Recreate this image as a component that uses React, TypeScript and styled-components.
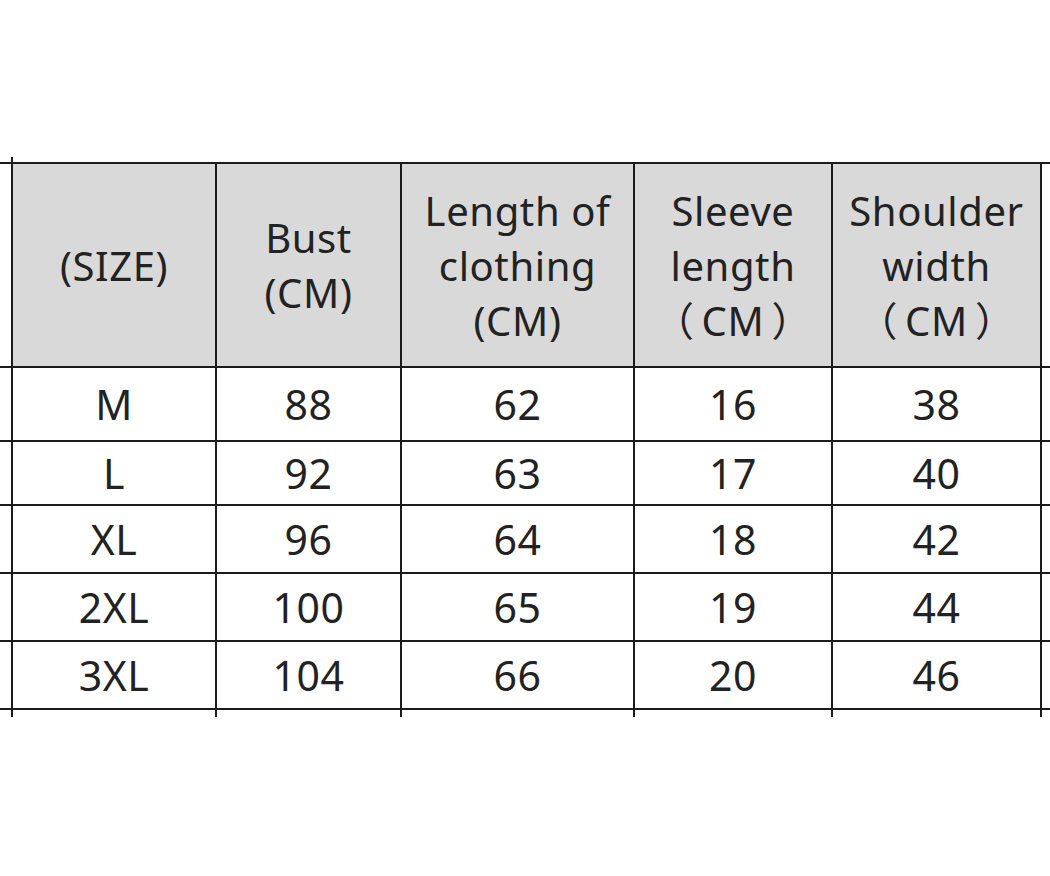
import React from "react";
import styled, { createGlobalStyle } from "styled-components";

const Global = createGlobalStyle`
  html, body { margin: 0; padding: 0; background: #ffffff; }
  body { font-family: "Noto Sans", "Noto Sans CJK KR", sans-serif; }
`;

const Page = styled.div`
  width: 1050px;
  height: 876px;
  overflow: hidden;
  padding-top: 157px;
  box-sizing: border-box;
`;

const Table = styled.table`
  border-collapse: collapse;
  table-layout: fixed;
  width: 1050px;
  color: #222222;
  font-family: "Noto Sans", "Noto Sans CJK KR", sans-serif;
`;

const Col = styled.col<{ $w: number }>`
  width: ${(p) => p.$w}px;
`;

const lineColor = "#1b1b1b";

const HeadCell = styled.th<{ $stub?: "left" | "right" }>`
  height: 202px;
  padding: 0;
  background: ${(p) => (p.$stub ? "#ffffff" : "#d9d9d9")};
  border-top: 2px solid ${lineColor};
  border-bottom: 2px solid ${lineColor};
  border-left: ${(p) => (p.$stub === "left" ? "none" : `2px solid ${lineColor}`)};
  border-right: ${(p) => (p.$stub === "right" ? "none" : `2px solid ${lineColor}`)};
  font-weight: 400;
  font-size: 40px;
  letter-spacing: 0.6px;
  line-height: 55px;
  text-align: center;
  vertical-align: middle;
  white-space: nowrap;
`;

const WideUnit = styled.span`
  padding: 0 7px;
`;

const Cell = styled.td<{ $stub?: "left" | "right"; $h: number }>`
  height: ${(p) => p.$h}px;
  padding: 0;
  background: #ffffff;
  border-top: 2px solid ${lineColor};
  border-bottom: 2px solid ${lineColor};
  border-left: ${(p) => (p.$stub === "left" ? "none" : `2px solid ${lineColor}`)};
  border-right: ${(p) => (p.$stub === "right" ? "none" : `2px solid ${lineColor}`)};
  font-size: 41px;
  letter-spacing: 0.5px;
  line-height: 1;
  text-align: center;
  vertical-align: middle;
`;

const ExtCell = styled.td<{ $line?: boolean; $h: number }>`
  height: ${(p) => p.$h}px;
  padding: 0;
  border: none;
  border-left: ${(p) => (p.$line ? `2px solid ${lineColor}` : "none")};
`;

const widths = [12, 204, 185, 233, 198, 209, 9];

const headers: React.ReactNode[] = [
  <>(SIZE)</>,
  <>
    Bust
    <br />
    (CM)
  </>,
  <>
    Length of
    <br />
    clothing
    <br />
    (CM)
  </>,
  <>
    Sleeve
    <br />
    length
    <br />
    （<WideUnit>CM</WideUnit>）
  </>,
  <>
    Shoulder
    <br />
    width
    <br />
    （<WideUnit>CM</WideUnit>）
  </>,
];

const rows: { h: number; values: string[] }[] = [
  { h: 72, values: ["M", "88", "62", "16", "38"] },
  { h: 62, values: ["L", "92", "63", "17", "40"] },
  { h: 66, values: ["XL", "96", "64", "18", "42"] },
  { h: 66, values: ["2XL", "100", "65", "19", "44"] },
  { h: 66, values: ["3XL", "104", "66", "20", "46"] },
];

export default function App() {
  return (
    <>
      <Global />
      <Page>
        <Table>
          <colgroup>
            {widths.map((w, i) => (
              <Col key={i} $w={w} />
            ))}
          </colgroup>
          <tbody>
            <tr>
              <ExtCell $h={5} />
              <ExtCell $h={5} $line />
              <ExtCell $h={5} />
              <ExtCell $h={5} />
              <ExtCell $h={5} />
              <ExtCell $h={5} />
              <ExtCell $h={5} />
            </tr>
            <tr>
              <HeadCell $stub="left" />
              {headers.map((h, i) => (
                <HeadCell key={i}>{h}</HeadCell>
              ))}
              <HeadCell $stub="right" />
            </tr>
            {rows.map((r, ri) => (
              <tr key={ri}>
                <Cell $h={r.h} $stub="left" />
                {r.values.map((v, i) => (
                  <Cell key={i} $h={r.h}>
                    {v}
                  </Cell>
                ))}
                <Cell $h={r.h} $stub="right" />
              </tr>
            ))}
            <tr>
              <ExtCell $h={7} />
              <ExtCell $h={7} $line />
              <ExtCell $h={7} $line />
              <ExtCell $h={7} $line />
              <ExtCell $h={7} $line />
              <ExtCell $h={7} $line />
              <ExtCell $h={7} $line />
            </tr>
          </tbody>
        </Table>
      </Page>
    </>
  );
}
